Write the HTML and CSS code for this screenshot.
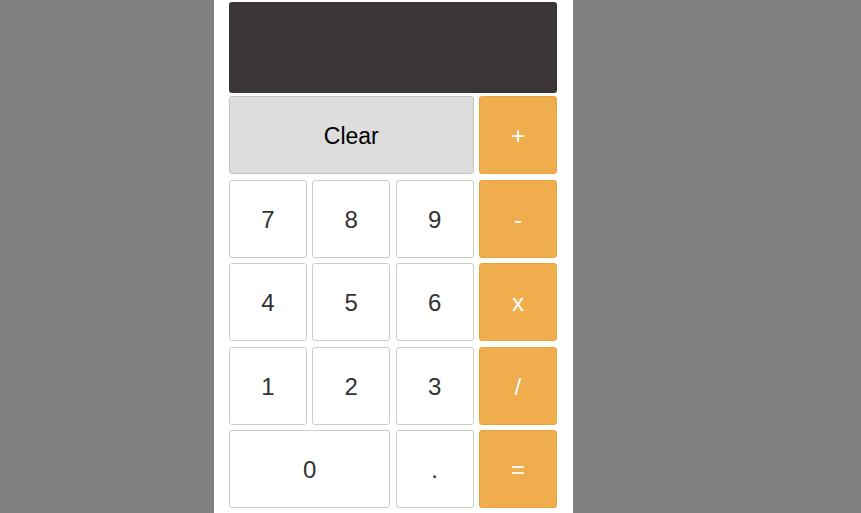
FILE: index.html
```html
<!DOCTYPE html>
<html>
<head>
<meta charset="utf-8">
<link rel="stylesheet" href="styles.css">
</head>
<body>
<div class="panel">
  <div class="display"></div>
  <div class="keys">
    <button class="key clear wide">Clear</button>
    <button class="key op">+</button>
    <button class="key">7</button>
    <button class="key">8</button>
    <button class="key">9</button>
    <button class="key op">-</button>
    <button class="key">4</button>
    <button class="key">5</button>
    <button class="key">6</button>
    <button class="key op">x</button>
    <button class="key">1</button>
    <button class="key">2</button>
    <button class="key">3</button>
    <button class="key op">/</button>
    <button class="key zero">0</button>
    <button class="key">.</button>
    <button class="key op">=</button>
  </div>
</div>
</body>
</html>
```
FILE: styles.css
```css
html, body {
  margin: 0;
  padding: 0;
  height: 100%;
  background: #808080;
}
body {
  display: flex;
  justify-content: flex-start;
  font-family: "Liberation Sans", Arial, sans-serif;
}
.panel {
  width: 329px;
  margin-left: 214px;
  background: #ffffff;
  padding: 2px 15px 0 15px;
  min-height: 100%;
  box-sizing: content-box;
}
.display {
  height: 91px;
  width: 328px;
  background: #3b3535;
  border-radius: 3px;
  margin-bottom: 3px;
}
.keys {
  display: grid;
  grid-template-columns: repeat(4, 78px);
  grid-auto-rows: 78px;
  column-gap: 5.3px;
  row-gap: 5.5px;
}
.key {
  font-family: "Liberation Sans", Arial, sans-serif;
  font-size: 24px;
  color: #333333;
  background: #ffffff;
  border: 1px solid #cccccc;
  border-radius: 3px;
  padding: 2px 0 0 0;
  margin: 0;
}
.wide {
  grid-column: span 3;
}
.zero {
  grid-column: span 2;
}
.clear {
  background: #dddddd;
  border-color: #c3c3c3;
  color: #000000;
  font-size: 23px;
}
.op {
  background: #efad4e;
  border-color: #eba33c;
  color: #ffffff;
}
```
